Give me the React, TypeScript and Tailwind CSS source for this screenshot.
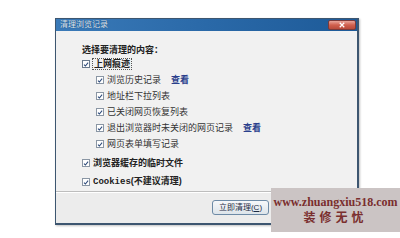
const cjk = { fontFamily: '"Liberation Sans", "Noto Sans CJK SC", sans-serif' };

function Check({ bold = false }: { bold?: boolean }) {
  return (
    <span
      className={`flex h-[8px] w-[8px] shrink-0 items-center justify-center border bg-white ${
        bold ? "border-[#6a7a8c]" : "border-[#8a96a4]"
      }`}
    >
      <svg viewBox="0 0 8 8" className="h-[7px] w-[7px]">
        <path d="M1.3 4.2 L3.2 6 L6.8 1.6" fill="none" stroke="#2d4a7a" strokeWidth="1.4" />
      </svg>
    </span>
  );
}

function Row({ label, link, indent }: { label: string; link?: string; indent?: boolean }) {
  return (
    <div className={`flex h-[16px] items-center ${indent ? "pl-[14px]" : ""}`}>
      <Check />
      <span className="ml-[3px] text-[9px] leading-none text-[#333]">{label}</span>
      {link && <span className="ml-[10px] text-[9px] font-bold leading-none text-[#2a3f8c]">{link}</span>}
    </div>
  );
}

export default function App() {
  return (
    <div className="relative h-[238px] w-[400px] overflow-hidden bg-white" style={cjk}>
      <div className="pl-[55px] pt-[18px]">
        <div className="flex h-[207px] w-[304px] flex-col border border-r-2 border-b-2 border-[#3d5670] bg-[#f1f1f1] shadow-[1px_1px_2px_rgba(0,0,0,0.25)]">
          {/* title bar */}
          <div className="flex h-[12px] items-center justify-between bg-gradient-to-r from-[#3a7ab8] via-[#2a69a8] to-[#1d5a98]">
            <span className="ml-[4px] text-[8px] leading-none text-[#dfeaf6] [text-shadow:0_0_1px_#0d2f57]">清理浏览记录</span>
            <div className="mr-[1px] flex h-[10px] w-[28px] items-center justify-center rounded-[2px] border border-[#7a3a3a] bg-gradient-to-b from-[#e8a49a] via-[#d0604e] to-[#b84a3a]">
              <svg viewBox="0 0 8 8" className="h-[6px] w-[6px]">
                <path d="M1 1 L7 7 M7 1 L1 7" stroke="#fff" strokeWidth="1.6" />
              </svg>
            </div>
          </div>
          {/* body */}
          <div className="flex flex-1 flex-col pl-[26px] pt-[13px]">
            <div className="h-[12px] text-[9px] font-bold leading-[12px] text-[#222]">选择要清理的内容：</div>
            <div className="mt-[1px] flex h-[14px] items-center">
              <Check bold />
              <span className="ml-[2px] border border-dotted border-[#555] px-[1px] text-[9px] font-bold leading-[10px] text-[#222]">
                上网痕迹
              </span>
            </div>
            <div className="mt-[1px] flex flex-col">
              <Row indent label="浏览历史记录" link="查看" />
              <Row indent label="地址栏下拉列表" />
              <Row indent label="已关闭网页恢复列表" />
              <Row indent label="退出浏览器时未关闭的网页记录" link="查看" />
              <Row indent label="网页表单填写记录" />
            </div>
            <div className="mt-[3px] flex h-[16px] items-center">
              <Check />
              <span className="ml-[3px] text-[9px] font-bold leading-none text-[#222]">浏览器缓存的临时文件</span>
            </div>
            <div className="mt-[3px] flex h-[16px] items-center">
              <Check />
              <span className="ml-[3px] text-[9px] font-bold leading-none text-[#222]">
                <span style={{ fontFamily: '"Liberation Mono", monospace' }}>Cookies</span>(不建议清理)
              </span>
            </div>
          </div>
          {/* footer */}
          <div className="flex h-[32px] items-center border-t border-[#bdbdbd] bg-[#ececec] pl-[156px] shadow-[inset_0_1px_0_#fff]">
            <div className="flex h-[15px] w-[57px] items-center justify-center rounded-[3px] border border-[#6d8aa6] bg-gradient-to-b from-[#f6f8fa] to-[#dde4ea] text-[8px] leading-none text-[#1d2b44]">
              立即清理(<span className="underline">C</span>)
            </div>
          </div>
        </div>
      </div>
      {/* watermark */}
      <div className="absolute left-[271px] top-[188px] flex h-[44px] w-[129px] flex-col items-center justify-center bg-[#cbc4c4]">
        <div
          className="text-[12px] font-bold leading-[16px] text-[#7a2e2e]"
          style={{ fontFamily: '"Liberation Serif", "Noto Serif CJK SC", serif' }}
        >
          www.zhuangxiu518.com
        </div>
        <div className="text-[12px] font-bold leading-[16px] tracking-[4px] text-[#7a2e2e]">装修无忧</div>
      </div>
    </div>
  );
}
